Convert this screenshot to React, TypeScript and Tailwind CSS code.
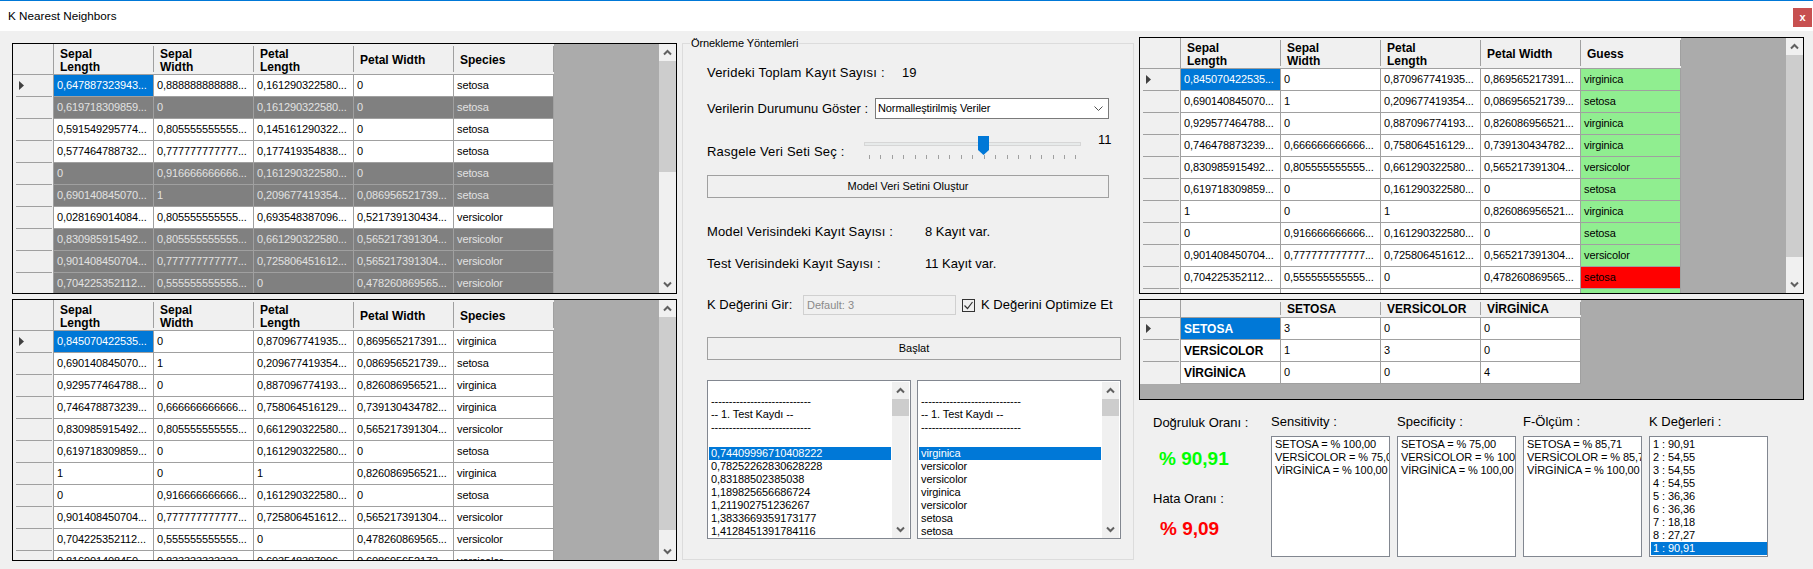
const font = { fontFamily: '"Liberation Sans", Arial, sans-serif' }

type Row = string[]

const trainRows: Row[] = [
  ['0,647887323943...', '0,888888888888...', '0,161290322580...', '0', 'setosa'],
  ['0,619718309859...', '0', '0,161290322580...', '0', 'setosa'],
  ['0,591549295774...', '0,805555555555...', '0,145161290322...', '0', 'setosa'],
  ['0,577464788732...', '0,777777777777...', '0,177419354838...', '0', 'setosa'],
  ['0', '0,916666666666...', '0,161290322580...', '0', 'setosa'],
  ['0,690140845070...', '1', '0,209677419354...', '0,086956521739...', 'setosa'],
  ['0,028169014084...', '0,805555555555...', '0,693548387096...', '0,521739130434...', 'versicolor'],
  ['0,830985915492...', '0,805555555555...', '0,661290322580...', '0,565217391304...', 'versicolor'],
  ['0,901408450704...', '0,777777777777...', '0,725806451612...', '0,565217391304...', 'versicolor'],
  ['0,704225352112...', '0,555555555555...', '0', '0,478260869565...', 'versicolor'],
]
const dimmedRows = [1, 4, 5, 7, 8, 9]

const testRows: Row[] = [
  ['0,845070422535...', '0', '0,870967741935...', '0,869565217391...', 'virginica'],
  ['0,690140845070...', '1', '0,209677419354...', '0,086956521739...', 'setosa'],
  ['0,929577464788...', '0', '0,887096774193...', '0,826086956521...', 'virginica'],
  ['0,746478873239...', '0,666666666666...', '0,758064516129...', '0,739130434782...', 'virginica'],
  ['0,830985915492...', '0,805555555555...', '0,661290322580...', '0,565217391304...', 'versicolor'],
  ['0,619718309859...', '0', '0,161290322580...', '0', 'setosa'],
  ['1', '0', '1', '0,826086956521...', 'virginica'],
  ['0', '0,916666666666...', '0,161290322580...', '0', 'setosa'],
  ['0,901408450704...', '0,777777777777...', '0,725806451612...', '0,565217391304...', 'versicolor'],
  ['0,704225352112...', '0,555555555555...', '0', '0,478260869565...', 'versicolor'],
  ['0,816901408450...', '0,833333333333...', '0,693548387096...', '0,608695652173...', 'versicolor'],
]
// the 11th row of the guess grid only shows its top edge, no text reaches the picture
const guessRows: Row[] = [...testRows.slice(0, 10), ['', '', '', '', '']]
const guesses = ['virginica', 'setosa', 'virginica', 'virginica', 'versicolor', 'setosa', 'virginica', 'setosa', 'versicolor', 'setosa', '']

const confusion: Row[] = [
  ['SETOSA', '3', '0', '0'],
  ['VERSİCOLOR', '1', '3', '0'],
  ['VİRGİNİCA', '0', '0', '4'],
]

function Chevron({ down }: { down?: boolean }) {
  return (
    <div className="h-[17px] flex items-center justify-center">
      <svg width="9" height="7" viewBox="0 0 9 7">
        <path d={down ? 'M1 1.5 L4.5 5 L8 1.5' : 'M1 5.5 L4.5 2 L8 5.5'} fill="none" stroke="#606060" strokeWidth="2" />
      </svg>
    </div>
  )
}

function Scrollbar({ thumb }: { thumb: number }) {
  return (
    <div className="w-[17px] shrink-0 h-full bg-[#f0f0f0] flex flex-col">
      <Chevron />
      <div className="bg-[#cdcdcd] shrink-0" style={{ height: thumb }} />
      <div className="flex-1" />
      <Chevron down />
    </div>
  )
}

function RowHead({ active, h = 'h-[22px]', line = true }: { active?: boolean; h?: string; line?: boolean }) {
  return (
    <div className={`w-[41px] shrink-0 ${h} bg-[#f0f0f0] border-r border-[#a0a0a0] pl-[3px] pr-[1px]`}>
      <div className={`h-full flex items-center pl-[3px] ${line ? 'border-b border-[#a0a0a0]' : ''}`}>
        {active && (
          <svg width="5" height="9" viewBox="0 0 5 9">
            <path d="M0 0 L5 4.5 L0 9 Z" fill="#404040" />
          </svg>
        )}
      </div>
    </div>
  )
}

function HeaderRow({ titles, h, pad }: { titles: string[]; h: string; pad: string }) {
  return (
    <div className={`flex ${h} bg-[#f0f0f0] border-b border-[#a0a0a0]`}>
      <div className="w-[41px] shrink-0 border-r border-[#a0a0a0]" />
      {titles.map((title, i) => (
        <div key={i} className="w-[100px] shrink-0 py-[2px]">
          <div className={`h-full flex items-center pl-[6px] ${pad} border-r border-[#a0a0a0] text-[12px] leading-[13px] font-bold text-black whitespace-pre-line`}>
            {title}
          </div>
        </div>
      ))}
    </div>
  )
}

function Cell({ text, className }: { text: string; className: string }) {
  return (
    <div className={`w-[100px] shrink-0 h-[22px] flex items-center pl-[3px] border-r border-b border-[#a0a0a0] text-[11px] tracking-[-0.12px] whitespace-nowrap overflow-hidden ${className}`}>
      {text}
    </div>
  )
}

function DataGrid({ rows, titles, dimmed = [], guess, height, thumb }: {
  rows: Row[]
  titles: string[]
  dimmed?: number[]
  guess?: string[]
  height: string
  thumb: number
}) {
  return (
    <div className={`${height} border border-black flex overflow-hidden`}>
      <div className="flex-1 bg-[#ababab] overflow-hidden">
        <div className="w-[541px]">
          <HeaderRow titles={titles} h="h-[31px]" pad="pt-[3px]" />
          {rows.map((row, r) => (
            <div key={r} className="flex">
              <RowHead active={r === 0} />
              {row.map((text, c) => {
                let cls = dimmed.includes(r) ? 'bg-[#808080] text-[#e2e2e2]' : 'bg-white text-black'
                if (r === 0 && c === 0) cls = 'bg-[#0078d7] text-white'
                if (guess && c === 4) cls = guess[r] === row[4] ? 'bg-[#90ee90] text-black' : 'bg-[#ff0000] text-black'
                return <Cell key={c} text={guess && c === 4 ? guess[r] : text} className={cls} />
              })}
            </div>
          ))}
        </div>
      </div>
      <Scrollbar thumb={thumb} />
    </div>
  )
}

function ConfusionGrid() {
  return (
    <div className="h-[101px] border border-black bg-[#ababab] overflow-hidden">
      <div className="w-[441px]">
        <HeaderRow titles={['', 'SETOSA', 'VERSİCOLOR', 'VİRGİNİCA']} h="h-[18px]" pad="pt-[1px]" />
        {confusion.map((row, r) => (
          <div key={r} className="flex">
            <RowHead active={r === 0} line={r < 2} />
            {row.map((text, c) => (
              <Cell
                key={c}
                text={text}
                className={
                  c === 0
                    ? r === 0
                      ? 'bg-[#0078d7] text-white font-bold text-[12px] tracking-normal'
                      : 'bg-white text-black font-bold text-[12px] tracking-normal'
                    : 'bg-white text-black'
                }
              />
            ))}
          </div>
        ))}
      </div>
    </div>
  )
}

function ListBox({ items, selected, scroll, width }: { items: string[]; selected?: number; scroll?: boolean; width: string }) {
  return (
    <div className={`${width} h-full border border-[#828790] bg-white flex overflow-hidden`}>
      <div className="flex-1 min-w-0 pt-[1px] pl-[1px] overflow-hidden">
        {items.map((item, i) => (
          <div
            key={i}
            className={`h-[13px] leading-[13px] pl-[2px] text-[11px] tracking-[-0.1px] whitespace-nowrap ${i === selected ? 'bg-[#0078d7] text-white' : 'text-black'}`}
          >
            {item || '\u00a0'}
          </div>
        ))}
      </div>
      {scroll && (
        <div className="ml-[1px] mr-[1px] mt-[1px]">
          <Scrollbar thumb={17} />
        </div>
      )}
    </div>
  )
}

function FlatButton({ label, width }: { label: string; width: string }) {
  return (
    <div className={`${width} h-[23px] border border-[#a0a0a0] flex items-center justify-center text-[11px] text-black`}>
      {label}
    </div>
  )
}

function Slider() {
  const ticks = Array.from({ length: 19 }, (_, i) => 5 + i * 11.47)
  return (
    <svg width="217" height="30" viewBox="0 0 217 30" className="shrink-0">
      <rect x="0.5" y="9.5" width="216" height="3" fill="#e7eaea" stroke="#d6d6d6" />
      {ticks.map((x, i) => (
        <line key={i} x1={Math.round(x) + 0.5} x2={Math.round(x) + 0.5} y1="22" y2="26" stroke="#a0a0a0" />
      ))}
      <path d="M114 3 H125 V17 L119.5 22 L114 17 Z" fill="#0078d7" />
    </svg>
  )
}

function GroupBox() {
  const first = [
    '',
    '----------------------------',
    '-- 1. Test Kaydı --',
    '----------------------------',
    '',
  ]
  return (
    <fieldset className="ml-[5px] mt-[6px] w-[452px] h-[523px] border border-[#dcdcdc] pl-[24px]">
      <legend className="-ml-[17px] px-[1px] text-[11px] leading-[13px] tracking-[-0.1px] text-black">Örnekleme Yöntemleri</legend>

      <div className="mt-[12px] h-[22px] flex items-center text-[13px] text-black">
        <span className="w-[195px] tracking-[0.2px]">Verideki Toplam Kayıt Sayısı :</span>
        <span>19</span>
      </div>

      <div className="mt-[14px] h-[21px] flex items-center text-[13px] text-black">
        <span className="w-[168px]">Verilerin Durumunu Göster :</span>
        <div className="w-[234px] h-[21px] border border-[#7a7a7a] bg-white flex items-center justify-between pl-[2px] pr-[5px] text-[11px] tracking-[-0.1px]">
          <span>Normalleştirilmiş Veriler</span>
          <svg width="9" height="6" viewBox="0 0 9 6">
            <path d="M0.5 0.5 L4.5 4.5 L8.5 0.5" fill="none" stroke="#505050" />
          </svg>
        </div>
      </div>

      <div className="mt-[14px] h-[30px] flex text-[13px] text-black">
        <span className="w-[157px] shrink-0 self-end mb-[2px] tracking-[0.2px]">Rasgele Veri Seti Seç :</span>
        <Slider />
        <span className="ml-[17px] leading-[13px]">11</span>
      </div>

      <div className="mt-[12px]">
        <FlatButton label="Model Veri Setini Oluştur" width="w-[402px]" />
      </div>

      <div className="mt-[23px] h-[22px] flex items-center text-[13px] text-black">
        <span className="w-[218px] tracking-[0.12px]">Model Verisindeki Kayıt Sayısı :</span>
        <span>8 Kayıt var.</span>
      </div>

      <div className="mt-[10px] h-[22px] flex items-center text-[13px] text-black">
        <span className="w-[218px] tracking-[0.1px]">Test Verisindeki Kayıt Sayısı :</span>
        <span>11 Kayıt var.</span>
      </div>

      <div className="mt-[20px] h-[20px] flex items-center text-[13px] text-black">
        <span className="w-[96px]">K Değerini Gir:</span>
        <div className="w-[153px] h-[20px] border border-[#d0d0d0] bg-[#f0f0f0] flex items-center pl-[3px] text-[11px] text-[#8a8a8a]">Default: 3</div>
        <div className="ml-[6px] w-[13px] h-[13px] border border-[#333333] flex items-center justify-center">
          <svg width="11" height="11" viewBox="0 0 11 11">
            <path d="M1.5 5.5 L4.5 8.5 L9.5 2" fill="none" stroke="#333333" strokeWidth="1.2" />
          </svg>
        </div>
        <span className="ml-[6px] whitespace-nowrap">K Değerini Optimize Et</span>
      </div>

      <div className="mt-[22px]">
        <FlatButton label="Başlat" width="w-[414px]" />
      </div>

      <div className="mt-[20px] h-[159px] flex gap-[6px]">
        <ListBox
          width="w-[204px]"
          scroll
          selected={5}
          items={[...first, '0,74409996710408222', '0,78252262830628228', '0,83188502385038', '1,189825656686724', '1,211902751236267', '1,3833669359173177', '1,4128451391784116']}
        />
        <ListBox
          width="w-[204px]"
          scroll
          selected={5}
          items={[...first, 'virginica', 'versicolor', 'versicolor', 'virginica', 'versicolor', 'setosa', 'setosa']}
        />
      </div>
    </fieldset>
  )
}

function Metrics() {
  const boxes = [
    { title: 'Sensitivity :', items: ['SETOSA = % 100,00', 'VERSİCOLOR = % 75,00', 'VİRGİNİCA = % 100,00'] },
    { title: 'Specificity :', items: ['SETOSA = % 75,00', 'VERSİCOLOR = % 100,00', 'VİRGİNİCA = % 100,00'] },
    { title: 'F-Ölçüm :', items: ['SETOSA = % 85,71', 'VERSİCOLOR = % 85,71', 'VİRGİNİCA = % 100,00'] },
    { title: 'K Değerleri :', items: ['1 : 90,91', '2 : 54,55', '3 : 54,55', '4 : 54,55', '5 : 36,36', '6 : 36,36', '7 : 18,18', '8 : 27,27', '1 : 90,91'], selected: 8 },
  ]
  return (
    <div className="flex text-[13px] text-black">
      <div className="w-[118px] ml-[14px] shrink-0">
        <div className="mt-[15px] h-[16px] leading-[16px]">Doğruluk Oranı :</div>
        <div className="mt-[16px] ml-[6px] h-[24px] leading-[24px] text-[19px] font-bold text-[#00ff00]">% 90,91</div>
        <div className="mt-[20px] h-[16px] leading-[16px]">Hata Oranı :</div>
        <div className="mt-[10px] ml-[7px] h-[24px] leading-[24px] text-[19px] font-bold text-[#ff0000]">% 9,09</div>
      </div>
      {boxes.map((box, i) => (
        <div key={i} className="w-[119px] mr-[7px] shrink-0">
          <div className="mt-[14px] h-[16px] leading-[16px]">{box.title}</div>
          <div className="mt-[6px] h-[121px]">
            <ListBox width="w-[119px]" items={box.items} selected={box.selected} />
          </div>
        </div>
      ))}
    </div>
  )
}

export default function App() {
  const columns = ['Sepal\nLength', 'Sepal\nWidth', 'Petal\nLength', 'Petal Width']
  return (
    <div className="w-[1813px] h-[569px] bg-[#f0f0f0] overflow-hidden flex flex-col" style={font}>
      {/* title bar */}
      <div className="h-[31px] shrink-0 bg-white border-t border-[#0078d7] flex justify-between pl-[8px] pr-[1px]">
        <span className="mt-[7px] text-[11.7px] leading-[16px] text-black">K Nearest Neighbors</span>
        <div className="mt-[7px] w-[19px] h-[19px] bg-[#c75050] flex items-center justify-center text-white text-[11px] font-bold leading-none">x</div>
      </div>

      <div className="flex-1 flex items-start">
        {/* left grids */}
        <div className="ml-[12px] mt-[12px] w-[665px] flex flex-col gap-[5px]">
          <DataGrid rows={trainRows} dimmed={dimmedRows} titles={[...columns, 'Species']} height="h-[251px]" thumb={111} />
          <DataGrid rows={testRows} titles={[...columns, 'Species']} height="h-[262px]" thumb={213} />
        </div>

        <GroupBox />

        {/* right side */}
        <div className="ml-[5px] mt-[6px] w-[665px] flex flex-col">
          <DataGrid rows={guessRows} guess={guesses} titles={[...columns, 'Guess']} height="h-[257px]" thumb={202} />
          <div className="mt-[5px]">
            <ConfusionGrid />
          </div>
          <Metrics />
        </div>
      </div>
    </div>
  )
}
